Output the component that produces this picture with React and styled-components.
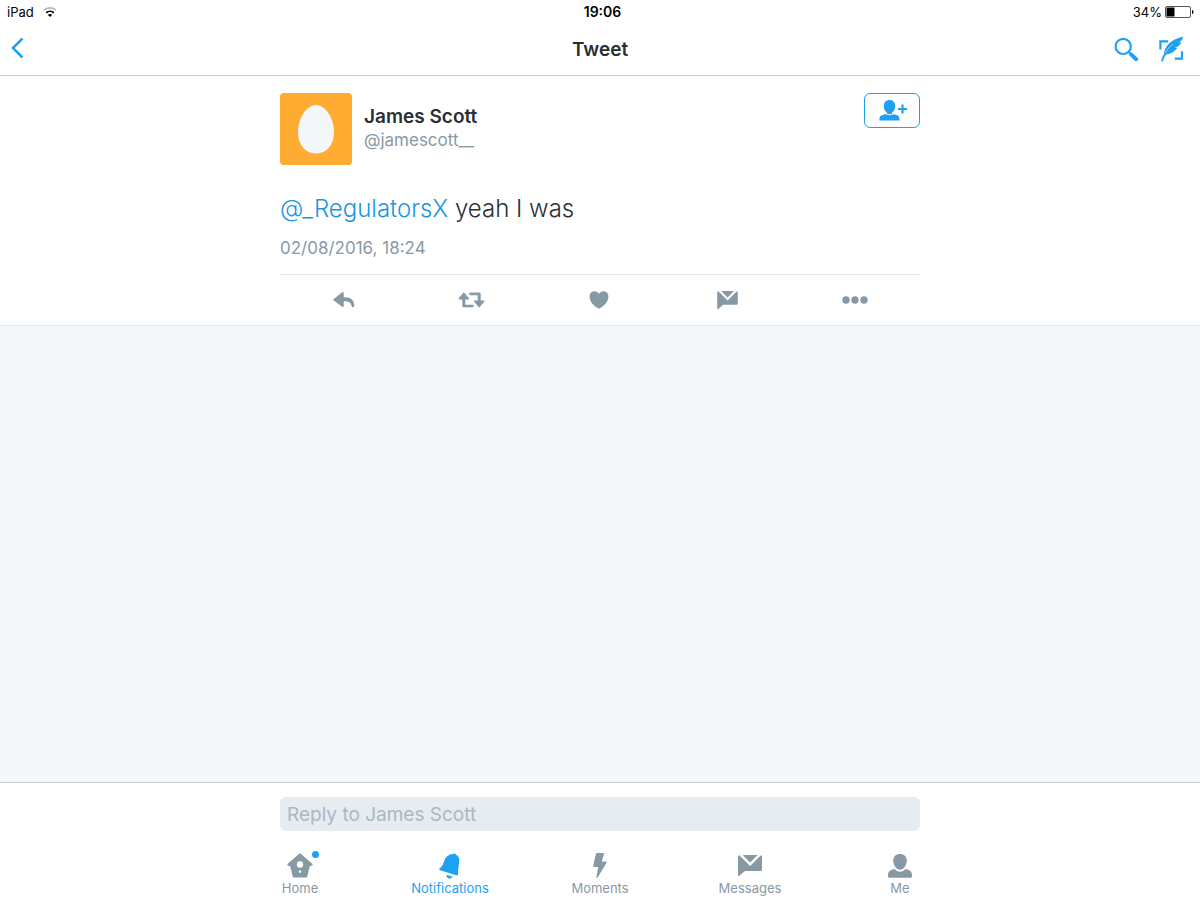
import styled, { createGlobalStyle } from "styled-components";

const GlobalStyle = createGlobalStyle`
  * {
    box-sizing: border-box;
  }

  body {
    margin: 0;
    background: #ffffff;
    color: #292f33;
    font-family: Inter, "Liberation Sans", sans-serif;
  }

  svg {
    display: block;
  }
`;

const Screen = styled.div`
  min-height: 100vh;
  display: flex;
  flex-direction: column;
`;

const StatusBar = styled.div`
  height: 24px;
  padding: 0 6px 0 7px;
  display: grid;
  grid-template-columns: 1fr auto 1fr;
  align-items: center;
  color: #000000;
  font-size: 13px;
  line-height: 24px;
`;

const StatusGroup = styled.div`
  display: flex;
  align-items: center;
  justify-content: ${(props) => (props.$end ? "flex-end" : "flex-start")};
  gap: ${(props) => (props.$end ? "3px" : "9px")};
`;

const Clock = styled.div`
  padding-left: 4px;
  font-weight: 600;
  font-size: 14px;
`;

const NavBar = styled.header`
  height: 52px;
  padding: 0 16px 0 10px;
  display: grid;
  grid-template-columns: 1fr auto 1fr;
  align-items: center;
  border-bottom: 1px solid #c9cdd2;
`;

const IconButton = styled.button`
  padding: 0;
  border: none;
  background: none;
  color: ${(props) => props.$color || "#1da1f2"};
  cursor: pointer;
`;

const NavTitle = styled.h1`
  margin: 0;
  padding-left: 6px;
  font-size: 19px;
  line-height: 24px;
  font-weight: 600;
`;

const NavActions = styled.div`
  display: flex;
  align-items: center;
  justify-content: flex-end;
  gap: 19px;
`;

const TweetSection = styled.main`
  background: #ffffff;
  border-bottom: 1px solid #e1e8ed;
`;

const Column = styled.div`
  width: 100%;
  max-width: 642px;
  margin: 0 auto;
`;

const TweetBody = styled.article`
  padding: 17px 1px 15px;
  border-bottom: 1px solid #e1e8ed;
`;

const Author = styled.div`
  display: flex;
  align-items: flex-start;
  gap: 12px;
`;

const Avatar = styled.svg`
  width: 72px;
  height: 72px;
  border-radius: 4px;
`;

const Names = styled.div`
  flex: 1;
  padding-top: 12px;
`;

const FullName = styled.div`
  font-size: 19px;
  line-height: 24px;
  font-weight: 600;
`;

const Handle = styled.div`
  font-size: 17px;
  line-height: 22px;
  color: #8899a6;
`;

const FollowButton = styled.button`
  width: 56px;
  height: 35px;
  padding: 0 0 0 2px;
  display: flex;
  align-items: center;
  justify-content: center;
  color: #1da1f2;
  background: #ffffff;
  border: 1px solid #1da1f2;
  border-radius: 6px;
  cursor: pointer;
`;

const TweetText = styled.p`
  margin: 27px 0 0;
  font-size: 24px;
  line-height: 34px;
  font-weight: 300;

  a {
    color: #1b95e0;
    text-decoration: none;
  }
`;

const TweetDate = styled.div`
  margin-top: 11px;
  font-size: 17px;
  line-height: 22px;
  color: #8899a6;
`;

const Actions = styled.div`
  height: 50px;
  padding: 0 2px 0 1px;
  display: grid;
  grid-template-columns: repeat(5, 1fr);
  align-items: center;
  justify-items: center;
`;

const Empty = styled.div`
  flex: 1;
  background: #f5f8fa;
`;

const Footer = styled.footer`
  padding: 14px 0 4px;
  background: #ffffff;
  border-top: 1px solid #c3ccd3;
`;

const ReplyInput = styled.input`
  width: 100%;
  height: 34px;
  padding: 0 7px;
  display: block;
  border: none;
  border-radius: 6px;
  background: #e7ecf0;
  color: #292f33;
  font-family: inherit;
  font-size: 19px;

  &::placeholder {
    color: #aab8c2;
    opacity: 1;
  }
`;

const ReplyColumn = styled(Column)`
  padding: 0 1px;
`;

const Tabs = styled.nav`
  width: 100%;
  max-width: 750px;
  margin: 20px auto 0;
  display: grid;
  grid-template-columns: repeat(5, 1fr);
`;

const Tab = styled.a`
  display: flex;
  flex-direction: column;
  align-items: center;
  color: ${(props) => (props.$active ? "#1da1f2" : "#8899a6")};
  font-size: 13px;
  line-height: 16px;
  text-decoration: none;
`;

const TabIcon = styled.span`
  position: relative;
  height: 29px;
  display: flex;
  align-items: center;
`;

const Dot = styled.span`
  position: absolute;
  top: 0;
  right: -6px;
  width: 7px;
  height: 7px;
  border-radius: 50%;
  background: #1da1f2;
`;

const WifiIcon = () => (
  <svg width="14" height="12" viewBox="0 0 14 12" fill="none">
    <path d="M1 4.2C4.4 1.1 9.6 1.1 13 4.2" stroke="#b5b5b5" strokeWidth="1.7" />
    <path d="M3.2 6.7C5.4 4.8 8.6 4.8 10.8 6.7" stroke="#000" strokeWidth="1.8" />
    <path d="M4.8 8.7C6.1 7.6 7.9 7.6 9.2 8.7L7 11Z" fill="#000" />
  </svg>
);

const BatteryIcon = () => (
  <svg width="29" height="12" viewBox="0 0 29 12">
    <rect x="0.5" y="0.5" width="25" height="11" rx="1.5" fill="#fff" stroke="#555" />
    <rect x="1.5" y="1.5" width="8" height="9" fill="#000" />
    <path d="M27 4C29 4.4 29 7.6 27 8Z" fill="#000" />
  </svg>
);

const BackIcon = () => (
  <svg width="14" height="22" viewBox="0 0 14 22" fill="none">
    <path d="M12.5 1.5L3 11L12.5 20.5" stroke="currentColor" strokeWidth="2.5" />
  </svg>
);

const SearchIcon = () => (
  <svg width="25" height="25" viewBox="0 0 25 25" fill="none" stroke="currentColor">
    <circle cx="9.2" cy="9.4" r="7.6" strokeWidth="2.2" />
    <path d="M14.5 14.8L17 17.3" strokeWidth="2.2" />
    <path d="M17.3 17.6L22.2 22.2" strokeWidth="4" strokeLinecap="round" />
  </svg>
);

const ComposeIcon = () => (
  <svg width="26" height="27" viewBox="0 0 26 27" fill="none">
    <path d="M2.4 13.6V5.4H10.2M16.8 22.6H24V15.2" stroke="currentColor" strokeWidth="2.2" />
    <path
      d="M3 25C3.6 22.6 4.6 20.4 5.9 18.2C6 10.6 12.6 3.8 24.9 .5C25 2.6 24.2 4.4 22.2 5.6L20.3 6.5L23.2 6C22.6 8.4 21 10.2 18.6 11.2L16.4 12L19.2 11.9C16.6 15.6 12.8 18 8.1 18.4C6.6 20.6 5.6 22.8 4.8 25.4Z"
      fill="currentColor"
    />
    <path d="M7 17.2C9 13.4 11.6 10.6 15 8" stroke="#fff" strokeWidth="0.5" />
  </svg>
);

const FollowIcon = () => (
  <svg width="28" height="22" viewBox="0 0 28 22" fill="currentColor">
    <path d="M10.5 0C14.2 0 16.2 2.5 16.2 5.9C16.2 8.8 15 11.2 13 12.6V13.8L18.2 15.3C20 15.9 20.6 17.3 20.6 20.6H.4C.4 17.3 1 15.9 2.8 15.3L8 13.8V12.6C6 11.2 4.8 8.8 4.8 5.9C4.8 2.5 6.8 0 10.5 0Z" />
    <path d="M22.4 4.5H24.6V7.9H28V10.1H24.6V13.5H22.4V10.1H19V7.9H22.4Z" />
    <path d="M6 13.4C9 15.2 12 15.2 15 13.4" fill="none" stroke="#fff" />
  </svg>
);

const ReplyIcon = () => (
  <svg width="22" height="16" viewBox="0 0 22 16" fill="currentColor">
    <path d="M.5 7.2L9.2 .3C10 -.2 10.7 .2 10.7 1V5.3H12.5C17.8 5.3 21.3 8.7 21.3 13.6C21.3 15.6 18.7 15.6 18.5 13.8C18.1 10.8 15.8 9.3 12.5 9.3H10.7V14C10.7 14.9 10 15.3 9.2 14.7L.5 8.2C0 7.9 0 7.5 .5 7.2Z" />
  </svg>
);

const RetweetIcon = () => (
  <svg width="27" height="16" viewBox="0 0 27 16" fill="currentColor">
    <path d="M5.8 .2L11 6.3C11.4 6.9 11.1 7.4 10.5 7.4H7.3V12.8H15.3L15.8 13.9L15.3 15.3H5.7C4.8 15.3 4.3 14.8 4.3 14V7.4H1.2C.5 7.4 .2 6.9 .7 6.3Z" />
    <path d="M21.2 15.8L16 9.6C15.6 9 15.9 8.5 16.5 8.5H19.7V3.2H11.8L11.1 2.1L11.8 .6H21.3C22.2 .6 22.7 1.1 22.7 1.9V8.5H25.8C26.5 8.5 26.8 9 26.3 9.6Z" />
  </svg>
);

const HeartIcon = () => (
  <svg width="20" height="18" viewBox="0 0 20 18" fill="currentColor">
    <path d="M10 17.8C5.5 15.6 .6 11.2 .6 5.6C.6 2.4 2.7 .3 5.4 .3C7.4 .3 9.1 1.2 10 2.7C10.9 1.2 12.6 .3 14.6 .3C17.3 .3 19.4 2.4 19.4 5.6C19.4 11.2 14.5 15.6 10 17.8Z" />
  </svg>
);

const MessageIcon = ({ width = 21 }) => (
  <svg width={width} height={Math.round(width * 0.88)} viewBox="0 0 24 21" fill="currentColor">
    <path d="M4.6 0H19.6L12.1 7.5Z" />
    <path d="M1.3 .3L12.1 11L22.9 .3C23.6 .5 24 1 24 1.7V14.5C24 15.5 23.4 16.1 22.4 16.1H7L1.6 20.6C.8 21.2 0 20.9 0 20V1.7C0 1 .5 .4 1.3 .3Z" />
  </svg>
);

const MoreIcon = () => (
  <svg width="26" height="8" viewBox="0 0 26 8" fill="currentColor">
    <circle cx="4" cy="4" r="3.7" />
    <circle cx="13" cy="4" r="3.7" />
    <circle cx="22" cy="4" r="3.7" />
  </svg>
);

const HomeIcon = () => (
  <svg width="26" height="25" viewBox="0 0 27 25" fill="currentColor">
    <path
      fillRule="evenodd"
      d="M12.7 .4C13.2 0 13.8 0 14.3 .4L26.2 10.8C26.9 11.5 26.8 12.2 26 12.6C25.3 13 24.6 13.1 23.7 13.1L21.2 23.4C21 24.4 20.4 25 19.4 25H7.6C6.6 25 6 24.4 5.8 23.4L3.3 13.1C2.4 13.1 1.7 13 1 12.6C.2 12.2 .1 11.5 .8 10.8ZM13.5 8.2A3.3 3.3 0 1 0 13.5 14.8A3.3 3.3 0 1 0 13.5 8.2ZM13.5 17.4A1.4 1.4 0 1 0 13.5 20.2A1.4 1.4 0 1 0 13.5 17.4Z"
    />
  </svg>
);

const BellIcon = () => (
  <svg width="22" height="26" viewBox="0 0 22 26" fill="currentColor">
    <path d="M14.2 1.1C14.8 0 16.7 .4 17 1.7C19.4 2.9 20.5 5 20.3 8L19.3 15.6C19 17.6 19.4 19.4 19.1 21.1C18.9 22.2 18.3 22.5 17.4 22.2L1.1 17.2C.2 16.9 0 16.2 .5 15.5L3 13C4 11.8 4.3 10.3 5.2 8C6.9 3.6 9.7 1.4 14.2 1.1Z" />
    <path d="M7.5 21.8L13.5 23.7C12.7 25.2 11.2 25.8 9.6 25.3C8 24.8 7.4 23.4 7.5 21.8Z" />
  </svg>
);

const BoltIcon = () => (
  <svg width="14" height="25" viewBox="0 0 14 25" fill="currentColor">
    <path d="M3.8 0H10.2C10.9 0 11.2 .5 11 1.1L8.8 8.4H12.8C13.7 8.4 14 9 13.6 9.7L4.8 24.3C4.3 25.2 3.3 24.9 3.5 23.9L5.2 14H1.2C.5 14 .1 13.5 .3 12.8L2.9 .8C3 .3 3.3 0 3.8 0Z" />
  </svg>
);

const PersonIcon = () => (
  <svg width="24" height="24" viewBox="0 0 24 24" fill="currentColor">
    <path d="M12 0C16 0 18.8 2.7 18.8 6.8C18.8 10.8 15.8 15.8 12 15.8C8.2 15.8 5.2 10.8 5.2 6.8C5.2 2.7 8 0 12 0Z" />
    <path d="M6.4 15.1C8 16.8 9.8 17.7 12 17.7C14.2 17.7 16 16.8 17.6 15.1C21.5 15.8 24 17.8 24 21.2V22C24 23.2 23.4 23.8 22.2 23.8H1.8C.6 23.8 0 23.2 0 22V21.2C0 17.8 2.5 15.8 6.4 15.1Z" />
  </svg>
);

const actions = [
  { label: "Reply", icon: <ReplyIcon /> },
  { label: "Retweet", icon: <RetweetIcon /> },
  { label: "Like", icon: <HeartIcon /> },
  { label: "Send message", icon: <MessageIcon /> },
  { label: "More", icon: <MoreIcon /> },
];

const tabs = [
  { label: "Home", icon: <HomeIcon />, dot: true },
  { label: "Notifications", icon: <BellIcon />, active: true },
  { label: "Moments", icon: <BoltIcon /> },
  { label: "Messages", icon: <MessageIcon width={24} /> },
  { label: "Me", icon: <PersonIcon /> },
];

const App = () => {
  return (
    <>
      <GlobalStyle />
      <Screen>
        <StatusBar>
          <StatusGroup>
            iPad
            <WifiIcon />
          </StatusGroup>
          <Clock>19:06</Clock>
          <StatusGroup $end>
            34%
            <BatteryIcon />
          </StatusGroup>
        </StatusBar>

        <NavBar>
          <div>
            <IconButton aria-label="Back">
              <BackIcon />
            </IconButton>
          </div>
          <NavTitle>Tweet</NavTitle>
          <NavActions>
            <IconButton aria-label="Search">
              <SearchIcon />
            </IconButton>
            <IconButton aria-label="Compose">
              <ComposeIcon />
            </IconButton>
          </NavActions>
        </NavBar>

        <TweetSection>
          <Column>
            <TweetBody>
              <Author>
                <Avatar viewBox="0 0 72 72">
                  <rect width="72" height="72" fill="#ffac33" />
                  <path
                    d="M36 12C46 12 54 26 54 39C54 52 46.5 60.5 36 60.5C25.5 60.5 18 52 18 39C18 26 26 12 36 12Z"
                    fill="#f5f8fa"
                  />
                </Avatar>
                <Names>
                  <FullName>James Scott</FullName>
                  <Handle>@jamescott__</Handle>
                </Names>
                <FollowButton aria-label="Follow">
                  <FollowIcon />
                </FollowButton>
              </Author>
              <TweetText>
                <a href="#regulators">@_RegulatorsX</a> yeah I was
              </TweetText>
              <TweetDate>02/08/2016, 18:24</TweetDate>
            </TweetBody>
            <Actions>
              {actions.map((action) => (
                <IconButton key={action.label} aria-label={action.label} $color="#8899a6">
                  {action.icon}
                </IconButton>
              ))}
            </Actions>
          </Column>
        </TweetSection>

        <Empty />

        <Footer>
          <ReplyColumn>
            <ReplyInput type="text" aria-label="Reply" placeholder="Reply to James Scott" />
          </ReplyColumn>
          <Tabs>
            {tabs.map((tab) => (
              <Tab key={tab.label} href={`#${tab.label}`} $active={tab.active}>
                <TabIcon>
                  {tab.icon}
                  {tab.dot && <Dot />}
                </TabIcon>
                {tab.label}
              </Tab>
            ))}
          </Tabs>
        </Footer>
      </Screen>
    </>
  );
};

export default App;
